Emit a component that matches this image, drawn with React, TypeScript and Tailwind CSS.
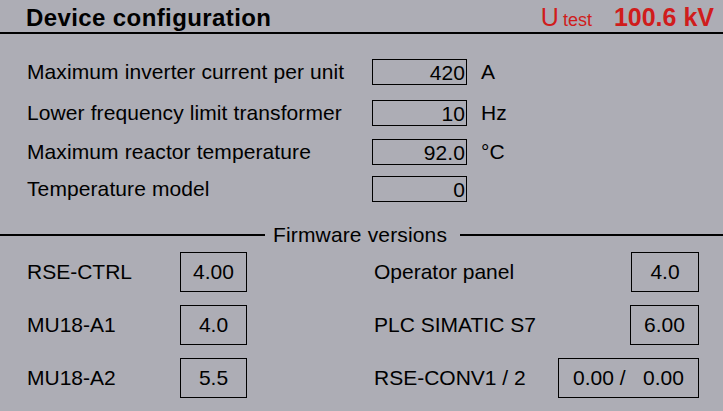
const params = [
  { label: "Maximum inverter current per unit", value: "420", unit: "A", gap: "mt-[25px]" },
  { label: "Lower frequency limit transformer", value: "10", unit: "Hz", gap: "mt-[15px]" },
  { label: "Maximum reactor temperature", value: "92.0", unit: "°C", gap: "mt-[13px]" },
  { label: "Temperature model", value: "0", unit: "", gap: "mt-[11px]" },
];

const firmware = [
  { left: "RSE-CTRL", leftValue: "4.00", right: "Operator panel", rightValue: "4.0", rightWidth: "w-[68px]" },
  { left: "MU18-A1", leftValue: "4.0", right: "PLC SIMATIC S7", rightValue: "6.00", rightWidth: "w-[69px]" },
  { left: "MU18-A2", leftValue: "5.5", right: "RSE-CONV1 / 2", rightValue: "0.00 /   0.00", rightWidth: "w-[141px]" },
];

export default function App() {
  return (
    <div className="w-[723px] h-[411px] overflow-hidden bg-[#adadb5] text-black font-['Liberation_Sans',Arial,sans-serif]">
      {/* header */}
      <div className="flex items-baseline justify-between h-[34px] border-b-2 border-black pt-[5px] pl-[26px] pr-[9px]">
        <div className="text-[24px] leading-[24px] font-bold tracking-[0.4px]">Device configuration</div>
        <div className="flex items-baseline text-[#d01c1c]">
          <span className="text-[25px] leading-[24px]">U</span>
          <span className="text-[18px] leading-[24px] ml-[4px]">test</span>
          <span className="text-[25px] leading-[24px] font-bold ml-[22px]">100.6 kV</span>
        </div>
      </div>

      {/* parameters */}
      <div className="flex flex-col pl-[27px] text-[21px] tracking-[0.1px]">
        {params.map((p) => (
          <div key={p.label} className={`flex items-center h-[26px] ${p.gap}`}>
            <div className="w-[345px] leading-[24px]">{p.label}</div>
            <div className="w-[95px] h-[26px] border border-black text-right pr-[1px] leading-[25px]">
              {p.value}
            </div>
            <div className="ml-[14px] leading-[24px]">{p.unit}</div>
          </div>
        ))}
      </div>

      {/* divider */}
      <div className="flex items-center h-[24px] mt-[21px] text-[21px]">
        <div className="w-[265px] h-[2px] bg-black" />
        <div className="ml-[8px] leading-[24px] tracking-[0.15px]">Firmware versions</div>
        <div className="flex-1 h-[2px] bg-black ml-[13px]" />
      </div>

      {/* firmware */}
      <div className="flex flex-col gap-[13px] mt-[5px] pl-[27px] text-[21px]">
        {firmware.map((f) => (
          <div key={f.left} className="flex items-center h-[40px]">
            <div className="flex items-center justify-between w-[220px]">
              <span className="leading-[24px]">{f.left}</span>
              <div className="w-[67px] h-[40px] border border-black flex items-center justify-center">
                {f.leftValue}
              </div>
            </div>
            <div className="flex items-center justify-between w-[325px] ml-[127px]">
              <span className="leading-[24px]">{f.right}</span>
              <div
                className={`${f.rightWidth} h-[40px] border border-black flex items-center justify-center whitespace-pre`}
              >
                {f.rightValue}
              </div>
            </div>
          </div>
        ))}
      </div>
    </div>
  );
}
